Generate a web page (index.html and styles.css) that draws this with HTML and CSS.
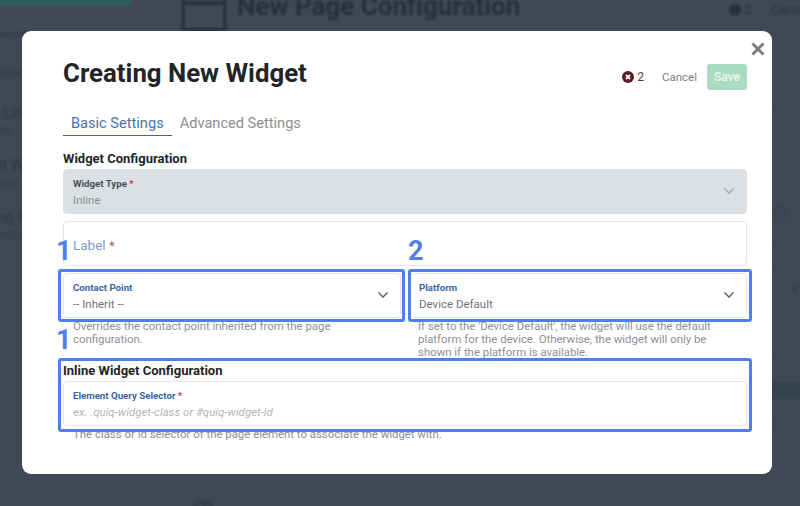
FILE: index.html
```html
<!DOCTYPE html>
<html>
    <head>
        <meta charset="utf-8">
        <title>Creating New Widget</title>
        <link rel="stylesheet" href="styles.css">
    </head>
    <body>
        <div class="page">
            <aside class="side">
                <div class="side__brand"></div>
                <div class="side__item side__item--muted">Overview</div>
                <div class="side__item side__item--muted">Navigation</div>
                <div class="side__item">
                    <div class="side__name">Quick Link</div>
                    <div class="side__sub">Web link</div>
                </div>
                <div class="side__item">
                    <div class="side__name">Chat Web</div>
                    <div class="side__sub">On web</div>
                </div>
                <div class="side__item">
                    <div class="side__name">Messaging Ex</div>
                    <div class="side__sub">Web expert</div>
                </div>
            </aside>
            <main class="back">
                <header class="back__head">
                    <svg class="back__icon" width="46" height="32" viewBox="0 0 46 32" fill="none" stroke="currentColor" stroke-width="3.5"><rect x="2" y="-16" width="42" height="46" rx="3"/><path d="M2 3h42"/></svg>
                    <div class="back__title">New Page Configuration</div>
                    <div class="back__actions">
                        <svg width="12" height="12" viewBox="0 0 12 12"><circle cx="6" cy="6" r="6" fill="currentColor"/></svg>
                        <span>2</span>
                        <span class="back__cancel">Cancel</span>
                    </div>
                </header>
                <div class="back__rows">
                    <div class="back__row"></div>
                    <div class="back__row"></div>
                    <div class="back__row back__row--icon">
                        <svg width="14" height="14" viewBox="0 0 14 14" fill="none" stroke="currentColor"><circle cx="7" cy="7" r="6"/><path d="M4 7h6"/></svg>
                    </div>
                    <div class="back__row"></div>
                    <div class="back__row"></div>
                    <div class="back__row back__row--x">&times;</div>
                    <div class="back__row"></div>
                    <div class="back__row"></div>
                    <div class="back__row back__row--band"></div>
                    <div class="back__row"></div>
                    <div class="back__row"></div>
                </div>
                <div class="back__card">iOS</div>
            </main>
        </div>

        <section class="modal">
            <svg class="modal__close" width="14" height="14" viewBox="0 0 14 14" fill="none" stroke="#7b7f84" stroke-width="3"><path d="M1.5 1.5l11 11M12.5 1.5l-11 11"/></svg>

            <header class="modal__head">
                <h1 class="modal__title">Creating New Widget</h1>
                <div class="modal__actions">
                    <svg class="err-icon" width="12" height="12" viewBox="0 0 12 12"><circle cx="6" cy="6" r="6" fill="#5c1f24"/><path d="M4 4l4 4M8 4l-4 4" stroke="#fff" stroke-width="1.8"/></svg>
                    <span class="err-count">2</span>
                    <span class="btn-cancel">Cancel</span>
                    <span class="btn-save">Save</span>
                </div>
            </header>

            <nav class="tabs">
                <span class="tab tab--active">Basic Settings</span>
                <span class="tab">Advanced Settings</span>
            </nav>

            <h2 class="section-title">Widget Configuration</h2>
            <div class="field field--disabled">
                <div>
                    <div class="field__label field__label--dark">Widget Type <i>*</i></div>
                    <div class="field__value">Inline</div>
                </div>
                <svg class="chevron chevron--light" width="12" height="8" viewBox="0 0 12 8" fill="none" stroke="currentColor" stroke-width="1.6"><path d="M1.5 1.5L6 6l4.5-4.5"/></svg>
            </div>

            <div class="field field--big">Label <i>*</i></div>

            <div class="cols">
                <div class="col">
                    <div class="field">
                        <div>
                            <div class="field__label">Contact Point</div>
                            <div class="field__value">-- Inherit --</div>
                        </div>
                        <svg class="chevron" width="12" height="8" viewBox="0 0 12 8" fill="none" stroke="currentColor" stroke-width="1.6"><path d="M1.5 1.5L6 6l4.5-4.5"/></svg>
                        <span class="mark mark--left"></span>
                        <span class="num num--a">1</span>
                        <span class="num num--b">1</span>
                    </div>
                    <p class="help">Overrides the contact point inherited from the page configuration.</p>
                </div>
                <div class="col col--right">
                    <div class="field">
                        <div>
                            <div class="field__label">Platform</div>
                            <div class="field__value">Device Default</div>
                        </div>
                        <svg class="chevron" width="12" height="8" viewBox="0 0 12 8" fill="none" stroke="currentColor" stroke-width="1.6"><path d="M1.5 1.5L6 6l4.5-4.5"/></svg>
                        <span class="mark mark--right"></span>
                        <span class="num num--c">2</span>
                    </div>
                    <p class="help">If set to the 'Device Default', the widget will use the default platform for the device. Otherwise, the widget will only be shown if the platform is available.</p>
                </div>
            </div>

            <div class="inline-block">
                <span class="mark mark--wide"></span>
                <h2 class="section-title section-title--tight">Inline Widget Configuration</h2>
                <div class="field">
                    <div>
                        <div class="field__label">Element Query Selector <i>*</i></div>
                        <div class="field__value field__value--hint">ex. .quiq-widget-class or #quiq-widget-id</div>
                    </div>
                </div>
                <p class="help">The class or id selector of the page element to associate the widget with.</p>
            </div>
        </section>
    </body>
</html>
```

FILE: styles.css
```css
* {
  padding: 0;
  margin: 0;
  box-sizing: border-box;
}

html, body {
  width: 800px;
  height: 506px;
  overflow: hidden;
}

body {
  background: #3f4854;
  font-family: Roboto, "Liberation Sans", sans-serif;
  color: #212529;
}

/* page dimmed behind the modal */
.page {
  display: flex;
  height: 506px;
  color: #27303c;
  filter: blur(0.8px);
}

.side {
  width: 236px;
  flex: none;
  margin-left: -60px;
  display: flex;
  flex-direction: column;
  white-space: nowrap;
}

.side__brand {
  width: 192px;
  height: 6px;
  background: #2d5f60;
  border-radius: 0 0 3px 3px;
}

.side__item {
  padding-left: 60px;
  height: 52px;
  font-size: 11px;
  color: #2d3642;
}

.side__item--muted {
  height: 39px;
  padding-top: 22px;
  text-indent: -8px;
}

.side__item--muted + .side__item--muted {
  height: 55px;
  text-indent: -30px;
}

.side__name {
  font-size: 15px;
  padding-top: 4px;
}

.side__sub {
  font-size: 11px;
  margin-top: 2px;
  color: #343d49;
}

.side__item:nth-child(4) .side__name { text-indent: -38px; }
.side__item:nth-child(4) .side__sub { text-indent: -30px; }
.side__item:nth-child(5) .side__name { text-indent: -24px; }
.side__item:nth-child(5) .side__sub { text-indent: -20px; }
.side__item:nth-child(6) .side__name { text-indent: -60px; }
.side__item:nth-child(6) .side__sub { text-indent: -24px; }

.back {
  flex: 1;
  min-width: 0;
  padding-left: 5px;
}

.back__head {
  display: flex;
  align-items: flex-start;
  height: 32px;
}

.back__icon {
  flex: none;
  color: #27303c;
}

.back__title {
  margin-left: 10px;
  margin-top: -9px;
  font-size: 26px;
  font-weight: 700;
  white-space: nowrap;
}

.back__actions {
  margin-left: auto;
  margin-right: -8px;
  margin-top: 3px;
  display: flex;
  align-items: center;
  gap: 4px;
  font-size: 12px;
}

.back__cancel {
  margin-left: 16px;
}

.back__rows {
  display: grid;
  grid-template-rows: 32px 45px 114px 24px 22px 44px 46px 24px 16px 24px 9px;
  margin-left: -5px;
}

.back__row {
  display: flex;
  align-items: flex-end;
  justify-content: flex-end;
  border-bottom: 1px solid #38424d;
}

.back__row--icon {
  padding: 0 13px 3px 0;
  color: #37414c;
}

.back__row--x {
  padding-right: 2px;
  font-size: 12px;
  line-height: 46px;
  color: #2a3340;
}

.back__row--band {
  background: #36414f;
  border-bottom: 0;
}

.back__card {
  margin-top: 51px;
  height: 30px;
  padding: 13px 0 0 11px;
  border-top: 1px solid #3a444f;
  border-left: 1px solid #3a444f;
  font-size: 13px;
  color: #2a3441;
}

/* modal */
.modal {
  position: absolute;
  left: 22px;
  top: 31px;
  width: 750px;
  height: 443px;
  background: #fff;
  border-radius: 9px;
  padding: 0 25px 0 41px;
}

.modal__close {
  position: absolute;
  top: 11px;
  right: 7px;
}

.modal__head {
  display: flex;
  align-items: flex-start;
  justify-content: space-between;
  padding-top: 33px;
  height: 76px;
}

.modal__title {
  margin-top: -1px;
  font-size: 25.8px;
  font-weight: 700;
  line-height: 20px;
}

.modal__actions {
  display: flex;
  align-items: center;
  font-size: 12px;
}

.err-count {
  margin-left: 3px;
  color: #5c3a3d;
}

.btn-cancel {
  margin-left: 18px;
  font-size: 11.5px;
  color: #7d8186;
}

.btn-save {
  margin-left: 10px;
  width: 40px;
  height: 26px;
  line-height: 26px;
  text-align: center;
  border-radius: 3px;
  background: #a9dcc1;
  color: #e9f7ef;
  font-weight: 500;
}

.tabs {
  display: flex;
  height: 27px;
  margin-top: 2px;
  font-size: 14.6px;
}

.tab {
  padding: 5px 8px 0;
  color: #8b8f94;
}

.tab--active {
  color: #4b73a8;
  border-bottom: 1.5px solid #3f6595;
}

.section-title {
  font-size: 13px;
  font-weight: 700;
  line-height: 15px;
  margin-top: 15px;
  margin-bottom: 3px;
}

.section-title--tight {
  margin-top: 0;
}

.field {
  position: relative;
  height: 45px;
  padding: 8px 10px 0 9px;
  display: flex;
  justify-content: space-between;
  border: 1px solid #e2e5e8;
  border-radius: 4px;
  background: #fff;
}

.field--disabled {
  background: #dbe0e5;
  border-color: #dbe0e5;
  margin-bottom: 7px;
}

.field--big {
  margin-bottom: 7px;
  display: block;
  padding-top: 15px;
  font-size: 13.5px;
  color: #7d9cc2;
}

.field i {
  font-style: normal;
  color: #d0343f;
}

.field--big i {
  color: #b8605f;
}

.field__label {
  font-size: 9.7px;
  line-height: 12px;
  font-weight: 700;
  color: #3a64a5;
}

.field__label--dark {
  color: #4a505a;
}

.field__value {
  margin-top: 3px;
  font-size: 11.5px;
  line-height: 14px;
  color: #6f7378;
}

.field--disabled .field__value {
  color: #8b9097;
}

.field__value--hint {
  font-style: italic;
  color: #b3b5b8;
}

.chevron {
  margin-top: 9px;
  margin-right: 1px;
  color: #6b6f74;
}

.chevron--light {
  color: #a7adb5;
}

.cols {
  display: grid;
  grid-template-columns: 338px 337px;
  column-gap: 9px;
}

.col--right .field {
  padding-left: 8px;
}

.col--right .help {
  padding-left: 8px;
}

.help {
  padding: 2px 10px 0;
  font-size: 11.4px;
  line-height: 13px;
  color: #8d9095;
}

/* blue annotations drawn over the form */
.mark {
  position: absolute;
  border: 3px solid #4f80ea;
  border-radius: 3px;
  pointer-events: none;
}

.mark--left {
  left: -6px;
  right: -5px;
  top: -5px;
  bottom: -5px;
}

.mark--right {
  left: -3px;
  right: -6px;
  top: -5px;
  bottom: -5px;
}

.mark--wide {
  left: -5px;
  right: -5px;
  top: 0;
  bottom: 9px;
}

.num {
  position: absolute;
  color: #4f80ea;
  font-size: 27px;
  font-weight: 700;
  line-height: 27px;
}

.num--a {
  left: -8px;
  top: -36px;
}

.num--b {
  left: -8px;
  top: 53px;
}

.num--c {
  left: -3px;
  top: -36px;
}

.inline-block {
  position: relative;
  margin-top: -1px;
  padding-top: 5px;
}
```
